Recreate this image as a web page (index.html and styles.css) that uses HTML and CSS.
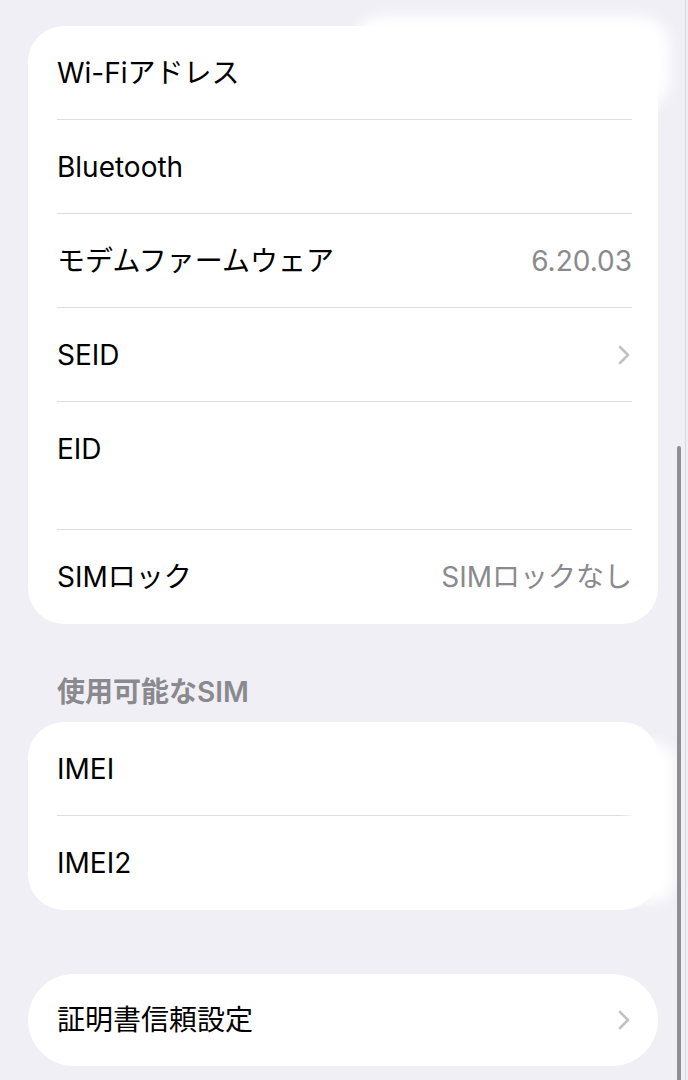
FILE: index.html
```html
<!DOCTYPE html>
<html lang="ja">
<head>
  <meta charset="UTF-8">
  <title>情報</title>
  <link rel="stylesheet" href="styles.css">
</head>
<body>

<div class="screen">

  <div class="group first">
    <div class="row">
      <span class="label">Wi-Fiアドレス</span>
    </div>
    <div class="row">
      <span class="label">Bluetooth</span>
    </div>
    <div class="row">
      <span class="label">モデムファームウェア</span>
      <span class="value">6.20.03</span>
    </div>
    <div class="row">
      <span class="label">SEID</span>
      <svg class="chevron" width="14" height="22" viewBox="0 0 14 22">
        <path d="M3 3 L11 11 L3 19" fill="none" stroke="#c2c2c6" stroke-width="2.6" stroke-linecap="round" stroke-linejoin="round"/>
      </svg>
    </div>
    <div class="row tall">
      <span class="label">EID</span>
      <span class="sub"></span>
    </div>
    <div class="row">
      <span class="label">SIMロック</span>
      <span class="value">SIMロックなし</span>
    </div>
  </div>

  <div class="group-title">使用可能なSIM</div>

  <div class="group">
    <div class="row">
      <span class="label">IMEI</span>
    </div>
    <div class="row">
      <span class="label">IMEI2</span>
    </div>
  </div>

  <div class="group last">
    <div class="row">
      <span class="label">証明書信頼設定</span>
      <svg class="chevron" width="14" height="22" viewBox="0 0 14 22">
        <path d="M3 3 L11 11 L3 19" fill="none" stroke="#c2c2c6" stroke-width="2.6" stroke-linecap="round" stroke-linejoin="round"/>
      </svg>
    </div>
  </div>

  <!-- redacted areas, smeared white -->
  <div class="smudge smudge-top"></div>
  <div class="smudge smudge-side"></div>

  <div class="edge"></div>
  <div class="scrollbar"></div>
</div>

</body>
</html>
```

FILE: styles.css
```css
body {
  margin: 0;
  padding: 0;
  background: #f0eff5;
  font-family: Inter, "Noto Sans CJK JP", sans-serif;
  color: #000;
}
.screen {
  position: relative;
  width: 688px;
  height: 1080px;
  overflow: hidden;
  padding-top: 26px;
  box-sizing: border-box;
}
.group {
  background: white;
  border-radius: 36px;
  margin: 0 30px 0 28px;
  padding: 0 26px 0 29px;
}
.group-title {
  color: #8a8a8e;
  font-size: 28px;
  font-weight: 600;
  line-height: 36px;
  padding: 50px 0 12px 57px;
}
.group.last {
  margin-top: 64px;
  border-radius: 46px;
}
.row {
  display: flex;
  align-items: center;
  justify-content: space-between;
  height: 93px;
  border-bottom: 1px solid #dedee0;
  font-size: 28px;
  line-height: 36px;
}
.row:last-child {
  border-bottom: none;
  height: 94px;
}
.group.last .row {
  height: 92px;
}
.row.tall {
  height: 128px;
  flex-direction: column;
  align-items: flex-start;
  justify-content: flex-start;
  padding-top: 29px;
  box-sizing: border-box;
}
.sub {
  display: block;
  height: 36px;
  margin-top: 6px;
}
.value {
  color: #8a8a8e;
}
.chevron {
  display: block;
  margin-right: 1px;
}
.smudge {
  position: absolute;
  background: white;
  filter: blur(7px);
}
.smudge-top {
  left: 352px;
  top: 16px;
  width: 318px;
  height: 94px;
  border-radius: 30px;
}
.smudge-side {
  left: 628px;
  top: 742px;
  width: 46px;
  height: 160px;
  border-radius: 20px;
}
.edge {
  position: absolute;
  top: 0;
  bottom: 0;
  right: 2px;
  width: 1px;
  background: #d8d8dc;
}
.scrollbar {
  position: absolute;
  top: 446px;
  bottom: 0;
  right: 7px;
  width: 4px;
  border-radius: 2px 2px 0 0;
  background: #8e8e93;
}
```
